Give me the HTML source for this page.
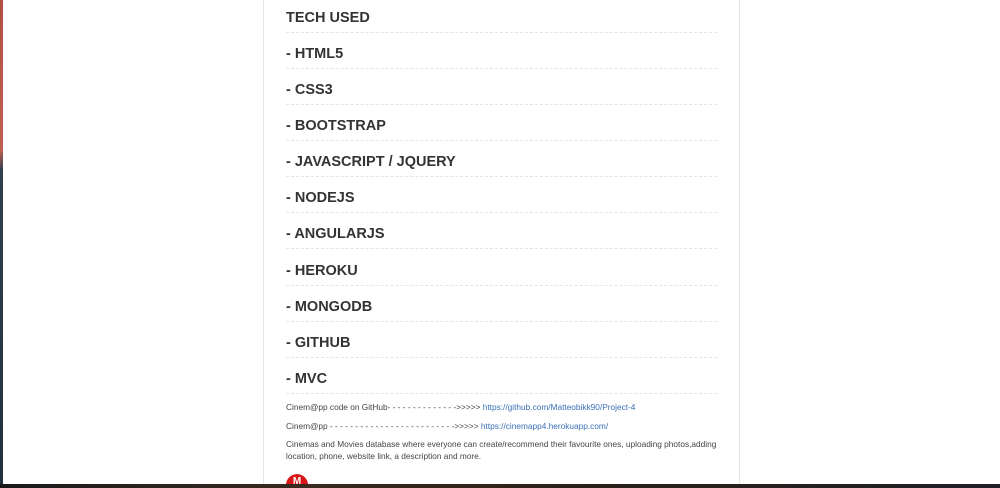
<!DOCTYPE html>
<html><head><meta charset="utf-8"><style>
html,body{margin:0;padding:0;width:1000px;height:488px;overflow:hidden;background:#fff;font-family:"Liberation Sans",sans-serif;position:relative}
.ledge{position:absolute;left:0;top:0;width:3px;height:488px;background:linear-gradient(#b05040 0,#c06050 150px,#304050 170px,#203040 488px)}
.bottom{position:absolute;left:0;top:484px;width:1000px;height:4px;background:linear-gradient(90deg,#1a1a1a,#3a2a20 30%,#2a2018 60%,#202028)}
.panel{position:absolute;left:263px;top:0;width:475px;height:484px;border-left:1px solid #e6e6e6;border-right:1px solid #e6e6e6}
.h{position:absolute;left:286px;width:431px;height:36px;border-bottom:1px dashed #e4e4e4;font-weight:bold;font-size:14.5px;color:#333;line-height:32px;padding-top:5px;box-sizing:border-box}
.s{position:absolute;left:286px;font-size:8.3px;color:#444;line-height:12px;width:436px}
.s a{color:#3a70b8;text-decoration:none}
.badge{position:absolute;left:286px;top:474px;width:22px;height:22px;border-radius:50%;background:#d81818;color:#fff;font-size:10px;font-weight:bold;text-align:center;line-height:16px}
</style></head><body>
<div class="ledge"></div>
<div class="panel"></div>
<div class="h" style="top:-3px">TECH USED</div>
<div class="h" style="top:33px">- HTML5</div>
<div class="h" style="top:69px">- CSS3</div>
<div class="h" style="top:105px">- BOOTSTRAP</div>
<div class="h" style="top:141px">- JAVASCRIPT / JQUERY</div>
<div class="h" style="top:177px">- NODEJS</div>
<div class="h" style="top:213px">- ANGULARJS</div>
<div class="h" style="top:250px">- HEROKU</div>
<div class="h" style="top:286px">- MONGODB</div>
<div class="h" style="top:322px">- GITHUB</div>
<div class="h" style="top:358px">- MVC</div>
<div class="s" style="top:401px">Cinem@pp code on GitHub- - - - - - - - - - - - - -&gt;&gt;&gt;&gt;&gt; <a>https://github.com/Matteobikk90/Project-4</a></div>
<div class="s" style="top:420px">Cinem@pp - - - - - - - - - - - - - - - - - - - - - - - - -&gt;&gt;&gt;&gt;&gt; <a>https://cinemapp4.herokuapp.com/</a></div>
<div class="s" style="top:438px">Cinemas and Movies database where everyone can create/recommend their favourite ones, uploading photos,adding location, phone, website link, a description and more.</div>
<div class="badge">M</div>
<div class="bottom"></div>
</body></html>
